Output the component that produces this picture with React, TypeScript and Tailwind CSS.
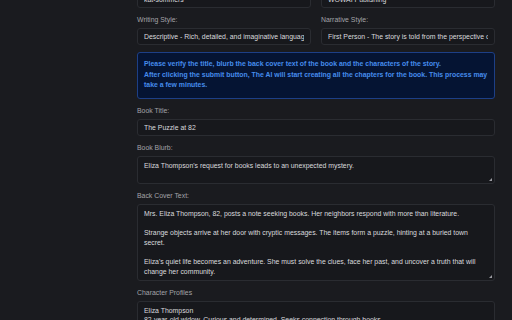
import React from "react";

function Label({ children }: { children: React.ReactNode }) {
  return (
    <div className="mb-[3px] text-[6.9px] leading-[10px] text-[#a3a3a8]">{children}</div>
  );
}

function Input({ children }: { children: React.ReactNode }) {
  return (
    <div className="h-[17px] rounded-[3px] border border-[#2a2c31] bg-[#17181c] px-[6px] text-[6.9px] leading-[15px] text-[#dadade]">
      <div className="overflow-hidden whitespace-nowrap">{children}</div>
    </div>
  );
}

function Area({ children, h }: { children: React.ReactNode; h: string }) {
  return (
    <div className={`relative overflow-hidden rounded-[3px] border border-[#2a2c31] bg-[#17181c] px-[6px] pt-[4px] text-[6.9px] leading-[9.7px] text-[#dadade] whitespace-pre-wrap ${h}`}>
      {children}
      <span className="absolute bottom-[2px] right-[2px] h-0 w-0 border-b-[3px] border-l-[3px] border-b-[#9a9aa0] border-l-transparent" />
    </div>
  );
}

export default function App() {
  return (
    <div className="h-[320px] w-[512px] overflow-hidden bg-[#1a1b1f] font-['Liberation_Sans',Arial,sans-serif]">
      <div className="ml-[137px] -mt-[9px] flex w-[358px] flex-col gap-[7px]">
        <div className="grid grid-cols-2 gap-[10px]">
          <Input>kat-sommers</Input>
          <Input>WOWAI Publishing</Input>
        </div>
        <div className="grid grid-cols-2 gap-[10px]">
          <div>
            <Label>Writing Style:</Label>
            <Input>Descriptive - Rich, detailed, and imaginative language</Input>
          </div>
          <div>
            <Label>Narrative Style:</Label>
            <Input>First Person - The story is told from the perspective of a character</Input>
          </div>
        </div>
        <div className="rounded-[3px] border border-[#1d3f86] bg-[#051433] px-[6px] pt-[6px] pb-[7px] text-[6.9px] font-bold leading-[10.5px] text-[#468cec]">
          Please verify the title, blurb the back cover text of the book and the characters of the story.
          <br />
          After clicking the submit button, The AI will start creating all the chapters for the book. This process may take a few minutes.
        </div>
        <div>
          <Label>Book Title:</Label>
          <Input>The Puzzle at 82</Input>
        </div>
        <div>
          <Label>Book Blurb:</Label>
          <Area h="h-[28px]">Eliza Thompson's request for books leads to an unexpected mystery.</Area>
        </div>
        <div>
          <Label>Back Cover Text:</Label>
          <Area h="h-[77px]">
            {"Mrs. Eliza Thompson, 82, posts a note seeking books. Her neighbors respond with more than literature.\n\nStrange objects arrive at her door with cryptic messages. The items form a puzzle, hinting at a buried town secret.\n\nEliza's quiet life becomes an adventure. She must solve the clues, face her past, and uncover a truth that will change her community."}
          </Area>
        </div>
        <div>
          <Label>Character Profiles</Label>
          <div className="h-[60px] rounded-[3px] border border-[#2a2c31] bg-[#17181c] px-[6px] pt-[4px] text-[6.9px] leading-[9.7px] text-[#dadade]">
            <div>Eliza Thompson</div>
            <div>82-year-old widow. Curious and determined. Seeks connection through books.</div>
          </div>
        </div>
      </div>
    </div>
  );
}
